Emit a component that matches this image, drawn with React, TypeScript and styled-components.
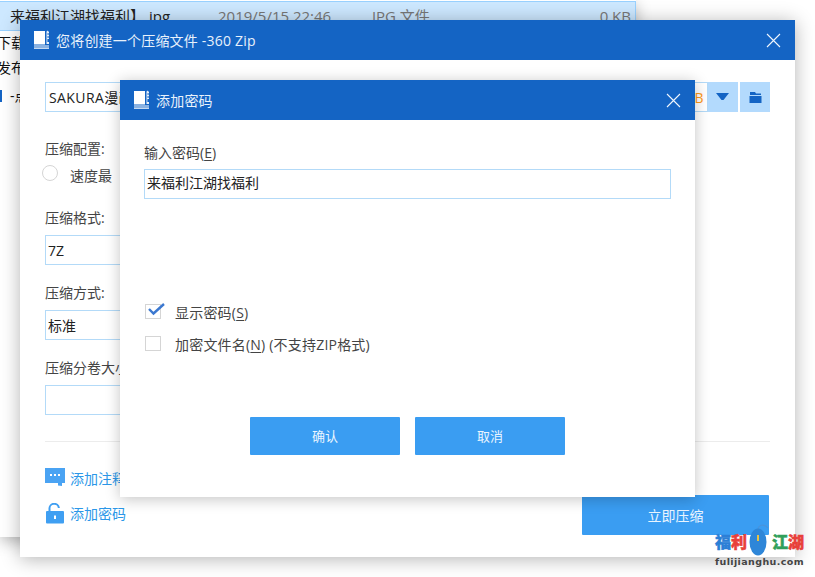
import React from "react";
import styled, { createGlobalStyle } from "styled-components";

const Global = createGlobalStyle`
  html, body { margin: 0; padding: 0; background: #fff; }
  body { font-family: "Open Sans", "Noto Sans CJK SC", sans-serif; font-size: 14px; color: #333; }
  * { box-sizing: border-box; }
`;

const Desktop = styled.div`
  position: relative;
  width: 815px;
  height: 577px;
  overflow: hidden;
  background: #fff;
`;

const ExplorerWindow = styled.div`
  position: absolute;
  left: 0;
  top: 0;
  width: 636px;
  height: 537px;
  background: #fff;
  box-shadow: 0 4px 14px rgba(0, 0, 0, 0.28);
  overflow: hidden;
`;

const FileRow = styled.div`
  display: grid;
  grid-template-columns: 208px 154px 1fr 60px;
  align-items: center;
  height: 30px;
  margin-top: 1px;
  padding: 0 4px 0 10px;
  background: #cde8ff;
  border: 1px solid #99d1ff;
  border-left: none;
  color: #777;
  font-size: 15px;
  line-height: 28px;
  white-space: nowrap;
`;

const FileName = styled.span`
  color: #222;
`;

const FileSize = styled.span`
  text-align: right;
`;

const SideLines = styled.div`
  display: flex;
  flex-direction: column;
  margin-left: -3px;
  color: #111;
  line-height: 20px;
  gap: 5px;
  margin-top: 2px;
`;

const MarkedLine = styled.div`
  display: flex;
  align-items: center;
  margin-top: 3px;
  height: 20px;
`;

const SelectionBar = styled.span`
  width: 2px;
  height: 12px;
  margin: 0 8px 0 3px;
  background: #1464c4;
`;

const BaseWindow = styled.div`
  position: absolute;
  background: #fff;
  display: flex;
  flex-direction: column;
`;

const ZipWindow = styled(BaseWindow)`
  left: 20px;
  top: 20px;
  width: 775px;
  height: 537px;
  box-shadow: 0 2px 18px rgba(0, 0, 0, 0.3);
`;

const Dialog = styled(BaseWindow)`
  left: 120px;
  top: 80px;
  width: 575px;
  height: 417px;
  box-shadow: 0 2px 14px rgba(0, 0, 0, 0.24);
`;

const TitleBar = styled.div`
  flex: none;
  height: 40px;
  background: #1464c4;
  color: #e8f1fb;
  display: flex;
  align-items: center;
  padding: 0 14px 0 13px;
  gap: 3px;
  font-size: 14px;
`;

const TitleText = styled.span`
  flex: 1;
  letter-spacing: 0.2px;
`;

const ZipBody = styled.div`
  flex: 1;
  padding: 22px 25px 0;
  display: flex;
  flex-direction: column;
  min-height: 0;
`;

const PathRow = styled.div`
  display: flex;
  height: 30px;
`;

const PathInput = styled.div`
  width: 663px;
  height: 30px;
  border: 1px solid #b3daf8;
  display: flex;
  align-items: center;
  justify-content: space-between;
  padding: 0 3px;
  color: #222;
  letter-spacing: 0.4px;
`;

const SizeUnit = styled.span`
  color: #ff9a1a;
`;

const SquareButton = styled.div<{ $gap?: boolean }>`
  width: 30px;
  height: 30px;
  margin-left: ${(p) => (p.$gap ? "2px" : "0")};
  background: #b3dafd;
  display: flex;
  align-items: center;
  justify-content: center;
`;

const FieldLabel = styled.div`
  color: #444;
  line-height: 20px;
`;

const ConfigLabel = styled(FieldLabel)`
  margin-top: 27px;
`;

const RadioRow = styled.div`
  display: flex;
  align-items: center;
  margin: 6px 0 0 -3px;
  height: 20px;
  gap: 12px;
  color: #444;
`;

const Radio = styled.span`
  width: 16px;
  height: 16px;
  border-radius: 50%;
  border: 1px solid #d5d5d5;
  margin-top: -4px;
`;

const Group = styled.div<{ $top: number }>`
  margin-top: ${(p) => p.$top}px;
  display: flex;
  flex-direction: column;
  gap: 7px;
`;

const SelectBox = styled.div`
  width: 400px;
  height: 30px;
  border: 1px solid #b3daf8;
  padding: 0 2px;
  display: flex;
  align-items: center;
  color: #222;
`;

const Divider = styled.div`
  height: 1px;
  background: #ececec;
  margin-top: 26px;
`;

const LinkRow = styled.div`
  display: flex;
  align-items: center;
  gap: 5px;
  height: 24px;
  color: #2b97e8;
`;

const LinkRowFirst = styled(LinkRow)`
  margin-top: 24px;
`;

const LinkRowSecond = styled(LinkRow)`
  margin-top: 11px;
`;

const BottomRow = styled.div`
  display: flex;
  align-items: flex-start;
  justify-content: space-between;
`;

const Links = styled.div`
  display: flex;
  flex-direction: column;
`;

const StartButton = styled.div`
  width: 187px;
  height: 40px;
  margin: 53px 1px 0 0;
  background: #3a9df2;
  border-radius: 1px;
  color: #eaf5ff;
  display: flex;
  align-items: center;
  justify-content: center;
`;

const DialogBody = styled.div`
  flex: 1;
  padding: 24px 25px 0 24px;
  display: flex;
  flex-direction: column;
`;

const DialogLabel = styled.div`
  color: #444;
  line-height: 20px;
  margin-top: -1px;
`;

const Mnemonic = styled.span`
  text-decoration: underline;
  text-underline-offset: 2px;
`;

const PasswordInput = styled.div`
  width: 527px;
  height: 30px;
  margin-top: 6px;
  border: 1px solid #b3daf8;
  padding: 0 2px 5px;
  display: flex;
  align-items: center;
  color: #222;
`;

const CheckRow = styled.div`
  display: flex;
  align-items: center;
  gap: 14px;
  height: 20px;
  color: #444;
  margin-left: 1px;
  letter-spacing: 0.2px;
`;

const CheckRowFirst = styled(CheckRow)`
  margin-top: 103px;
`;

const CheckRowSecond = styled(CheckRow)`
  margin-top: 12px;
`;

const CheckBox = styled.span`
  position: relative;
  width: 16px;
  height: 15px;
  border: 1px solid #d5d5d5;
  margin-top: -2px;
`;

const CheckMark = styled.svg`
  position: absolute;
  left: 0;
  top: -4px;
`;

const DialogButtons = styled.div`
  display: flex;
  justify-content: center;
  gap: 15px;
  margin-top: 63px;
  padding-left: 1px;
`;

const DialogButton = styled.div`
  width: 150px;
  height: 38px;
  padding-bottom: 2px;
  background: #3a9df2;
  border-radius: 1px;
  color: #eaf5ff;
  font-size: 13px;
  display: flex;
  align-items: center;
  justify-content: center;
`;

const Watermark = styled.div`
  position: absolute;
  left: 713px;
  top: 523px;
  width: 93px;
  display: flex;
  flex-direction: column;
  align-items: center;
`;

const BrandLine = styled.div`
  display: flex;
  align-items: flex-start;
  height: 34px;
  gap: 2px;
  font-size: 16px;
  font-weight: 900;
  line-height: 1;
  -webkit-text-stroke: 0.5px currentColor;
`;

const BrandChars = styled.div`
  display: flex;
  padding-top: 11px;
`;

const BrandChar = styled.span<{ $c: string }>`
  color: ${(p) => p.$c};
`;

const BrandUrl = styled.div`
  font-family: "DejaVu Sans", sans-serif;
  font-size: 9.5px;
  font-weight: 700;
  letter-spacing: 0.4px;
  color: #444;
  line-height: 12px;
  margin-top: -1px;
`;

const ZipIcon = () => (
  <svg width="20" height="20" viewBox="0 0 20 20">
    <path fill="#fff" d="M1 1h11v13.5H1z" />
    <path fill="#fff" d="M13.5 1.5 15 0.5v1h1V14h-2.5z" opacity="0.9" />
    <path fill="#1464c4" d="M14.6 3h1v2h-1zM14.6 6h1v2h-1zM14.4 9h1.6v3h-1.6z" />
    <path fill="#fff" d="M1 15.5h15v1H1zM1 17.5h15v1.2H1z" />
  </svg>
);

const CloseIcon = () => (
  <svg width="15" height="15" viewBox="0 0 15 15">
    <path stroke="#f0f6fd" strokeWidth="1.1" d="M1 1l13 13M14 1L1 14" />
  </svg>
);

const CommentIcon = () => (
  <svg width="20" height="20" viewBox="0 0 20 20">
    <path fill="#4aa3f3" d="M0 0h20v15h-3v3l-4-0.5V15H0z" />
    <path fill="#fff" d="M5 6h2v2H5zM9 6h2v2H9zM13 6h2v2h-2z" />
  </svg>
);

const LockIcon = () => (
  <svg width="20" height="21" viewBox="0 0 20 21">
    <path fill="none" stroke="#3f9ff2" strokeWidth="2" d="M4.5 8V6a4.7 4.7 0 0 1 9.4-1" />
    <rect x="1" y="8" width="18" height="12.5" rx="1" fill="#3f9ff2" />
    <rect x="9" y="12.5" width="2" height="3.5" fill="#fff" />
  </svg>
);

const MouseIcon = () => (
  <svg width="21" height="33" viewBox="0 0 21 33">
    <path fill="none" stroke="#4a94dc" strokeWidth="1.2" d="M9 7c0-5 6-7 10-2" />
    <ellipse cx="9" cy="19" rx="8.5" ry="13.5" fill="#2e86d8" />
    <rect x="8" y="12" width="2" height="6" fill="#e8c244" />
  </svg>
);

export default function App() {
  return (
    <Desktop>
      <Global />
      <ExplorerWindow>
        <FileRow>
          <FileName>来福利江湖找福利】.jpg</FileName>
          <span>2019/5/15 22:46</span>
          <span>JPG 文件</span>
          <FileSize>0 KB</FileSize>
        </FileRow>
        <SideLines>
          <span>下载</span>
          <span>发布</span>
          <MarkedLine>
            <SelectionBar />
            <span>-点</span>
          </MarkedLine>
        </SideLines>
      </ExplorerWindow>

      <ZipWindow>
        <TitleBar>
          <ZipIcon />
          <TitleText>您将创建一个压缩文件 -360 Zip</TitleText>
          <CloseIcon />
        </TitleBar>
        <ZipBody>
          <PathRow>
            <PathInput>
              <span>SAKURA漫画</span>
              <SizeUnit>B</SizeUnit>
            </PathInput>
            <SquareButton>
              <svg width="14" height="8" viewBox="0 0 14 8"><path fill="#1464c4" d="M0 0h13L7.5 7h-2z" /></svg>
            </SquareButton>
            <SquareButton $gap>
              <svg width="13" height="11" viewBox="0 0 13 11"><path fill="#1464c4" d="M1 0h5l1 1.5h5V3H1zM0.5 4h12v7H.5z" /></svg>
            </SquareButton>
          </PathRow>
          <ConfigLabel>压缩配置:</ConfigLabel>
          <RadioRow>
            <Radio />
            <span>速度最</span>
          </RadioRow>
          <Group $top={23}>
            <FieldLabel>压缩格式:</FieldLabel>
            <SelectBox>7Z</SelectBox>
          </Group>
          <Group $top={18}>
            <FieldLabel>压缩方式:</FieldLabel>
            <SelectBox>标准</SelectBox>
          </Group>
          <Group $top={18}>
            <FieldLabel>压缩分卷大小:</FieldLabel>
            <SelectBox />
          </Group>
          <Divider />
          <BottomRow>
            <Links>
              <LinkRowFirst>
                <CommentIcon />
                <span>添加注释</span>
              </LinkRowFirst>
              <LinkRowSecond>
                <LockIcon />
                <span>添加密码</span>
              </LinkRowSecond>
            </Links>
            <StartButton>立即压缩</StartButton>
          </BottomRow>
        </ZipBody>
      </ZipWindow>

      <Dialog>
        <TitleBar>
          <ZipIcon />
          <TitleText>添加密码</TitleText>
          <CloseIcon />
        </TitleBar>
        <DialogBody>
          <DialogLabel>
            输入密码(<Mnemonic>E</Mnemonic>)
          </DialogLabel>
          <PasswordInput>来福利江湖找福利</PasswordInput>
          <CheckRowFirst>
            <CheckBox>
              <CheckMark width="20" height="16" viewBox="0 0 20 16">
                <path fill="none" stroke="#3b78d0" strokeWidth="2.4" d="M3 8l4.5 4.5L18 3" />
              </CheckMark>
            </CheckBox>
            <span>
              显示密码(<Mnemonic>S</Mnemonic>)
            </span>
          </CheckRowFirst>
          <CheckRowSecond>
            <CheckBox />
            <span>
              加密文件名(<Mnemonic>N</Mnemonic>) (不支持ZIP格式)
            </span>
          </CheckRowSecond>
          <DialogButtons>
            <DialogButton>确认</DialogButton>
            <DialogButton>取消</DialogButton>
          </DialogButtons>
        </DialogBody>
      </Dialog>

      <Watermark>
        <BrandLine>
          <BrandChars>
            <BrandChar $c="#2c7fd6">福</BrandChar>
            <BrandChar $c="#e8403a">利</BrandChar>
          </BrandChars>
          <MouseIcon />
          <BrandChars>
            <BrandChar $c="#2fa05a">江</BrandChar>
            <BrandChar $c="#e8403a">湖</BrandChar>
          </BrandChars>
        </BrandLine>
        <BrandUrl>fulijianghu.com</BrandUrl>
      </Watermark>
    </Desktop>
  );
}
